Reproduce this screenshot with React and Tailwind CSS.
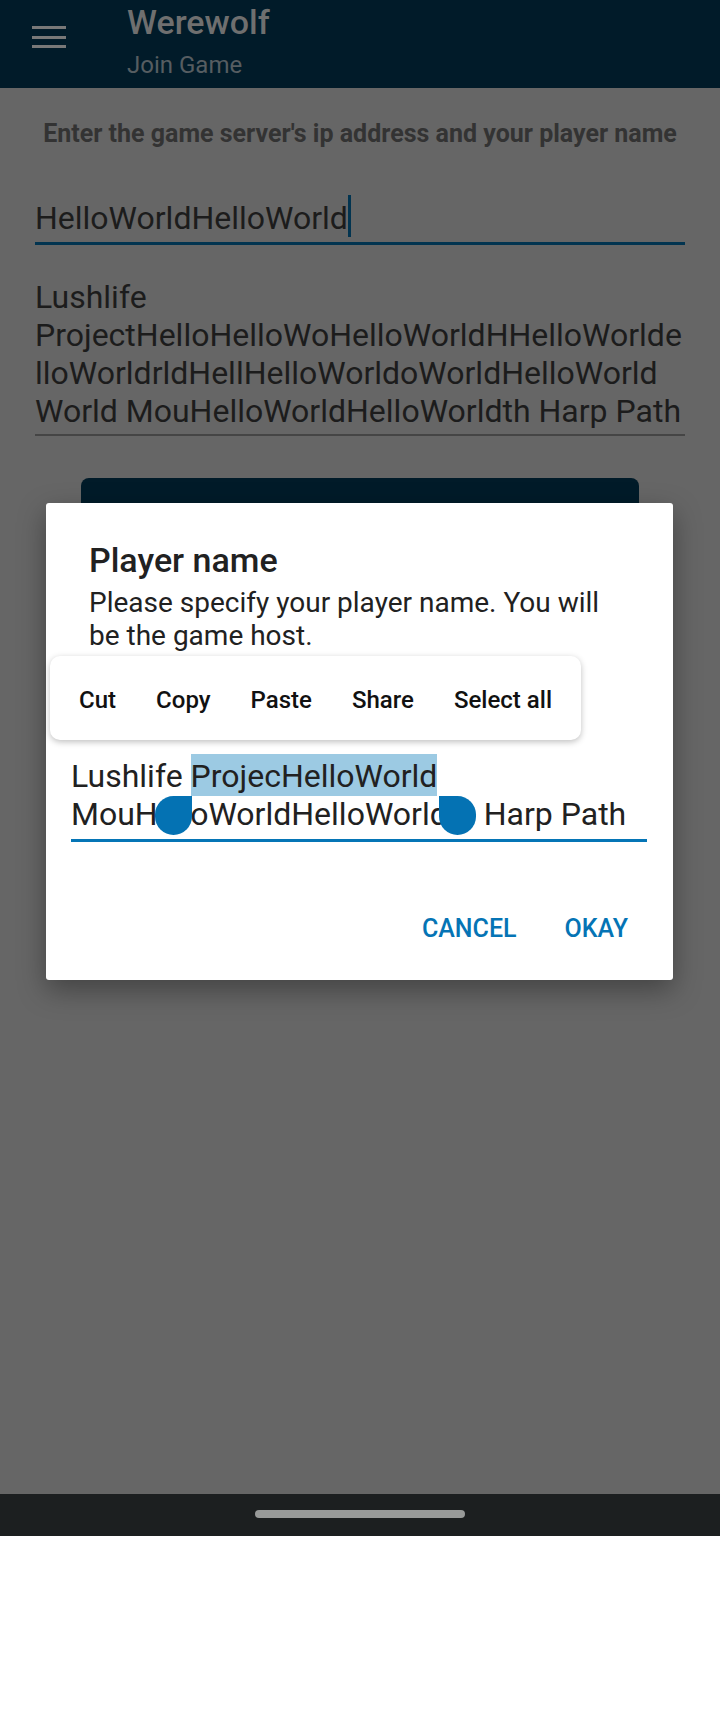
import React from 'react';

const Hamburger = () => (
    <svg width="34" height="22" viewBox="0 0 34 22" className="block">
        <rect x="0" y="0" width="34" height="3" fill="#787878" />
        <rect x="0" y="10" width="34" height="3" fill="#787878" />
        <rect x="0" y="19" width="34" height="3" fill="#787878" />
    </svg>
);

const TextToolbar = () => (
    <div className="absolute left-[4px] top-[153px] w-[531px] h-[84px] bg-white rounded-[10px] shadow-[0_2px_6px_rgba(0,0,0,0.25)] flex items-center justify-between px-[29px] pt-[4px] text-[24px] leading-[28px] font-medium text-[#111111]">
        <span>Cut</span>
        <span>Copy</span>
        <span>Paste</span>
        <span>Share</span>
        <span>Select all</span>
    </div>
);

const PlayerNameDialog = () => (
    <div className="absolute left-[46px] top-[503px] w-[627px] bg-white rounded-[3px] shadow-[0_10px_28px_rgba(0,0,0,0.35)] pt-[37px] pb-[36px]">
        <h2 className="pl-[43px] text-[34px] leading-[40px] font-medium text-[#212121]">Player name</h2>
        <p className="pl-[43px] mt-[6px] text-[28px] leading-[33px] text-[#212121]">
            Please specify your player name. You will
            <br />
            be the game host.
        </p>

        <div className="ml-[25px] mr-[26px] mt-[105px] pb-[6px] border-b-[3px] border-[#0575b6] text-[32px] leading-[38px] text-[#212121] whitespace-nowrap">
            Lushlife <span className="bg-[#9ccae3] pt-[3px] pb-[1px]">ProjecHelloWorld</span>
            <br />
            MouHelloWorldHelloWorldth Harp Path
        </div>

        <div className="flex justify-end gap-[48px] pr-[45px] mt-[72px] text-[25px] leading-[30px] font-medium text-[#0574b5]">
            <span>CANCEL</span>
            <span>OKAY</span>
        </div>

        <TextToolbar />

        <div className="absolute left-[109px] top-[293px] w-[37px] h-[39px] bg-[#0472b3] rounded-full rounded-tr-none" />
        <div className="absolute left-[393px] top-[293px] w-[37px] h-[39px] bg-[#0472b3] rounded-full rounded-tl-none" />
    </div>
);

const App = () => {
    return (
        <div className="relative w-[720px] h-[1712px] bg-white font-['Roboto',sans-serif] overflow-hidden">
            <header className="h-[88px] bg-[#011b29] flex items-start">
                <div className="pl-[32px] pt-[26px]">
                    <Hamburger />
                </div>
                <div className="ml-[61px] pt-[2px]">
                    <div className="text-[34px] leading-[40px] font-medium text-[#6f6f6f]">Werewolf</div>
                    <div className="mt-[9px] text-[24px] leading-[28px] text-[#565d61]">Join Game</div>
                </div>
            </header>

            <main className="h-[1406px] bg-[#666666] pt-[31px]">
                <p className="text-center text-[25px] leading-[30px] font-bold text-[#333333]">
                    Enter the game server's ip address and your player name
                </p>

                <div className="mx-[35px] mt-[50px] pb-[5px] border-b-[3px] border-[#023450] text-[32px] leading-[38px] text-[#1c1c1c] whitespace-nowrap">
                    HelloWorldHelloWorld
                    <span className="relative inline-block w-[3px] h-0">
                        <span className="absolute left-0 bottom-[-8px] w-[3px] h-[42px] bg-[#023450]" />
                    </span>
                </div>

                <div className="mx-[35px] mt-[33px] pb-[4px] border-b-2 border-[#454545] text-[32px] leading-[38px] text-[#1c1c1c] whitespace-nowrap">
                    Lushlife
                    <br />
                    ProjectHelloHelloWoHelloWorldHHelloWorlde
                    <br />
                    lloWorldrldHellHelloWorldoWorldHelloWorld
                    <br />
                    World MouHelloWorldHelloWorldth Harp Path
                </div>

                <div className="mx-[81px] mt-[42px] h-[84px] rounded-[8px] bg-[#011b29]" />
            </main>

            <div className="h-[42px] bg-[#1c1f20] pt-[16px]">
                <div className="mx-auto w-[210px] h-[8px] rounded-full bg-[#989a99]" />
            </div>

            <PlayerNameDialog />
        </div>
    );
};

export default App;
